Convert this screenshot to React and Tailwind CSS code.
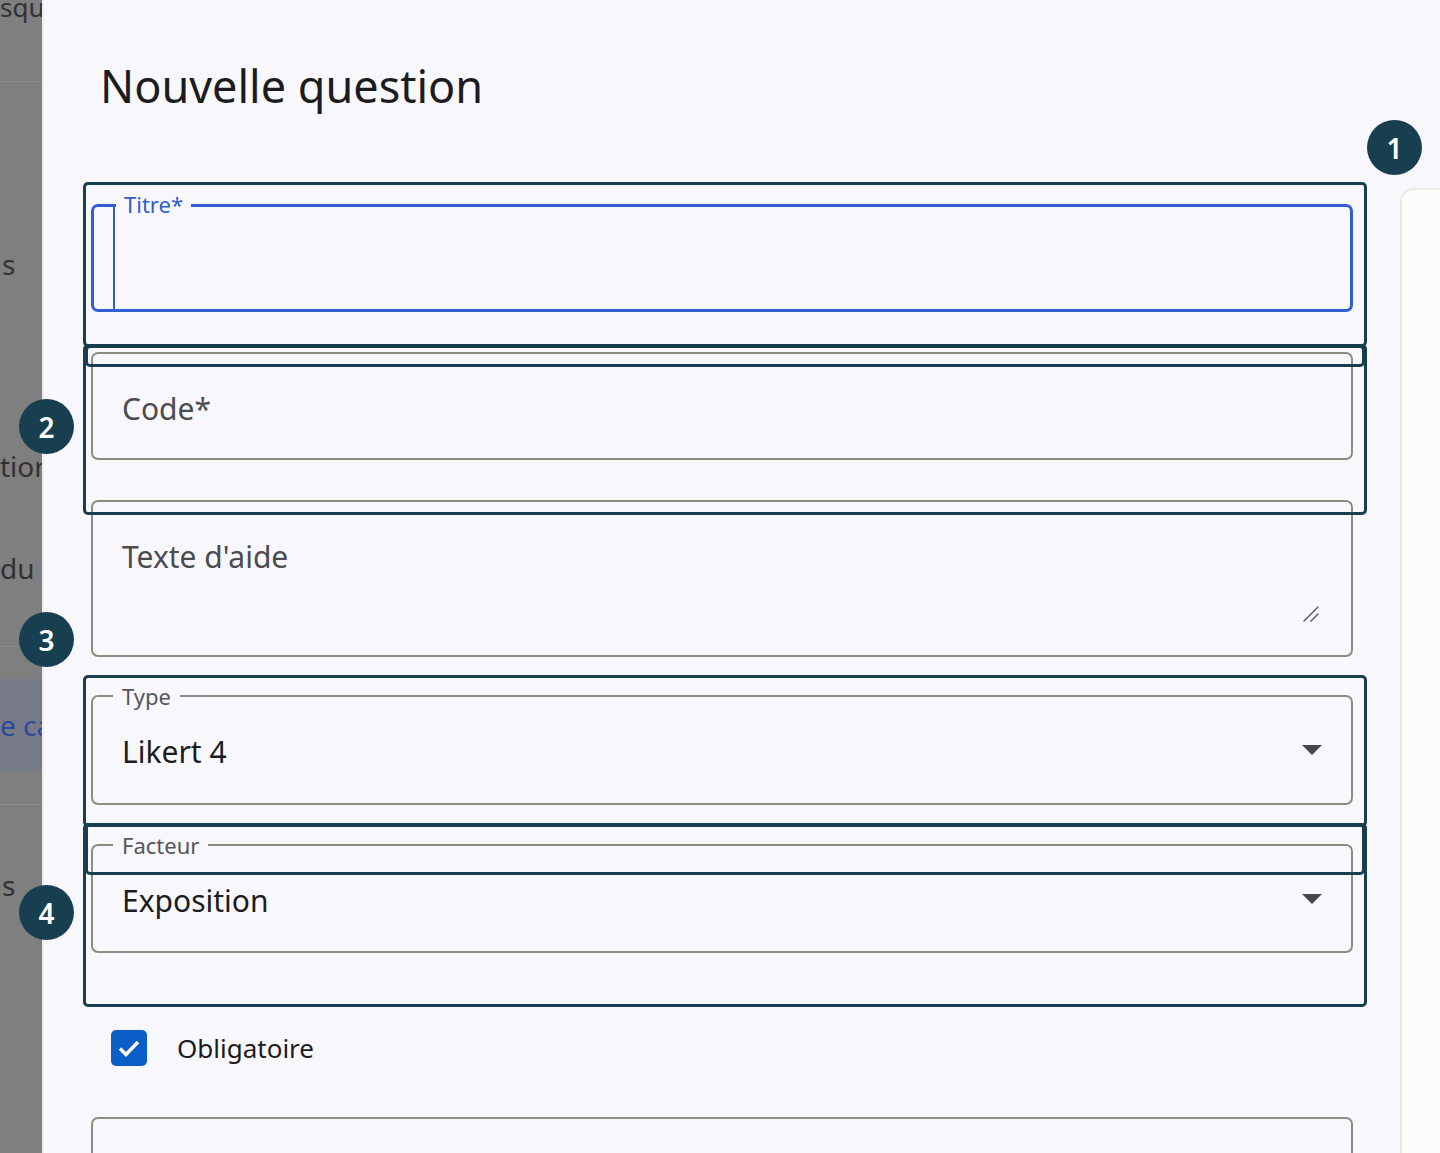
import React from 'react';

const font = { fontFamily: '"Noto Sans", "Liberation Sans", sans-serif' };

// dropdown caret used by the two select fields
const Caret = () => (
  <svg width="20" height="10" viewBox="0 0 20 10" className="shrink-0">
    <path d="M0 0 L20 0 L10 10 Z" fill="#46464b" />
  </svg>
);

const ResizeHandle = () => (
  <svg width="18" height="18" viewBox="0 0 18 18">
    <path d="M2 16 L16 2 M9 16 L16 9" stroke="#55555a" strokeWidth="1.4" strokeLinecap="round" />
  </svg>
);

const Badge = ({ n, className }) => (
  <div
    className={`absolute w-[55px] h-[55px] rounded-full bg-[#173f4f] text-white flex items-center justify-center text-[28px] font-semibold ${className}`}
  >
    {n}
  </div>
);

const SelectField = ({ label, value, className }) => (
  <div className={`relative shrink-0 border-2 border-[#8e8c82] rounded-[7px] flex items-center justify-between pl-[29px] pr-[29px] ${className}`}>
    <span className="absolute left-[20px] top-[-15px] px-[9px] bg-[#f8f8fc] text-[22px] leading-[28px] text-[#55555a]">
      {label}
    </span>
    <span className="text-[30px] text-[#1c1c1f] mt-[3px]">{value}</span>
    <Caret />
  </div>
);

export default function App() {
  return (
    <div style={font} className="relative w-[1440px] h-[1153px] overflow-hidden flex bg-[#f8f8fc]">
      {/* dimmed page behind the drawer */}
      <div className="w-[42px] shrink-0 bg-[#7f7f7f] overflow-hidden text-[#323236] text-[28px] whitespace-nowrap flex flex-col">
        <div className="h-[82px] shrink-0 border-b border-[#8b8b8b] overflow-hidden">
          <div className="leading-[30px] mt-[-8px] text-[26px]">sque</div>
        </div>
        <div className="h-[355px] shrink-0 flex flex-col">
          <div className="mt-[164px] leading-[36px] pl-[2px]">s</div>
          <div className="mt-[166px] leading-[36px]">tior</div>
        </div>
        <div className="h-[210px] shrink-0 border-b border-[#8b8b8b] flex flex-col">
          <div className="mt-[113px] leading-[36px]">du</div>
        </div>
        <div className="mt-[32px] h-[92px] shrink-0 bg-[#777b88] flex items-center text-[#2b4a9b]">e ca</div>
        <div className="h-[34px] shrink-0 border-b border-[#8b8b8b]"></div>
        <div className="mt-[62px] leading-[36px] pl-[2px]">s</div>
      </div>

      {/* drawer */}
      <div className="flex-1 border-l-2 border-[#eeeef2] pt-[58px] px-[47px] flex flex-col">
        <h1 className="shrink-0 text-[45px] leading-[56px] text-[#1c1c1f] pl-[9px]">Nouvelle question</h1>

        {/* Titre (focused) */}
        <div className="relative shrink-0 mt-[90px] h-[108px] border-[3px] border-[#2f5fd0] rounded-[7px] flex">
          <div className="w-[21px] h-full border-r-2 border-[#2f5fd0]"></div>
          <span className="absolute left-[22px] top-[-17px] px-[8px] bg-[#f8f8fc] text-[22px] leading-[28px] text-[#2f5fd0]">
            Titre*
          </span>
        </div>

        {/* Code */}
        <div className="shrink-0 mt-[40px] h-[108px] border-2 border-[#8e8c82] rounded-[7px] flex items-center pl-[29px]">
          <span className="text-[30px] text-[#4b4b50] mt-[4px]">Code*</span>
        </div>

        {/* Texte d'aide */}
        <div className="shrink-0 mt-[40px] h-[157px] border-2 border-[#8e8c82] rounded-[7px] flex flex-col pl-[29px] pr-[31px] pt-[37px] pb-[32px]">
          <span className="text-[30px] leading-[36px] text-[#4b4b50]">Texte d'aide</span>
          <div className="mt-auto self-end">
            <ResizeHandle />
          </div>
        </div>

        <SelectField label="Type" value="Likert 4" className="mt-[38px] h-[110px]" />
        <SelectField label="Facteur" value="Exposition" className="mt-[39px] h-[109px]" />

        {/* Obligatoire */}
        <div className="shrink-0 mt-[77px] h-[36px] flex items-center pl-[20px]">
          <div className="w-[36px] h-[36px] rounded-[5px] bg-[#0b5ec8] flex items-center justify-center">
            <svg width="28" height="28" viewBox="0 0 28 28">
              <path d="M5 14.5 L11 20.5 L23 8" fill="none" stroke="#fff" strokeWidth="3.4" />
            </svg>
          </div>
          <span className="ml-[30px] text-[26px] text-[#1c1c1f]">Obligatoire</span>
        </div>

        <div className="mt-[51px] h-[200px] shrink-0 border-2 border-[#8e8c82] rounded-[7px]"></div>
      </div>

      {/* next panel peeking in on the right */}
      <div className="w-[40px] shrink-0 mt-[188px] border-l-2 border-t-2 border-[#e9e9ea] rounded-tl-[14px] bg-[#fdfcfa]"></div>

      {/* annotation overlay */}
      <div className="absolute inset-0 pointer-events-none">
        <div className="absolute left-[83px] top-[182px] w-[1284px] h-[165px] border-[3px] border-[#173f4f] rounded-[5px]"></div>
        <div className="absolute left-[85px] top-[345px] w-[1280px] h-[22px] border-[3px] border-[#173f4f] rounded-[5px]"></div>
        <div className="absolute left-[83px] top-[344px] w-[1284px] h-[171px] border-[3px] border-[#173f4f] rounded-[5px]"></div>
        <div className="absolute left-[83px] top-[675px] w-[1284px] h-[152px] border-[3px] border-[#173f4f] rounded-[5px]"></div>
        <div className="absolute left-[85px] top-[823px] w-[1280px] h-[52px] border-[3px] border-[#173f4f] rounded-[5px]"></div>
        <div className="absolute left-[83px] top-[823px] w-[1284px] h-[184px] border-[3px] border-[#173f4f] rounded-[5px]"></div>
        <Badge n="1" className="left-[1367px] top-[120px]" />
        <Badge n="2" className="left-[19px] top-[399px]" />
        <Badge n="3" className="left-[19px] top-[612px]" />
        <Badge n="4" className="left-[19px] top-[885px]" />
      </div>
    </div>
  );
}
